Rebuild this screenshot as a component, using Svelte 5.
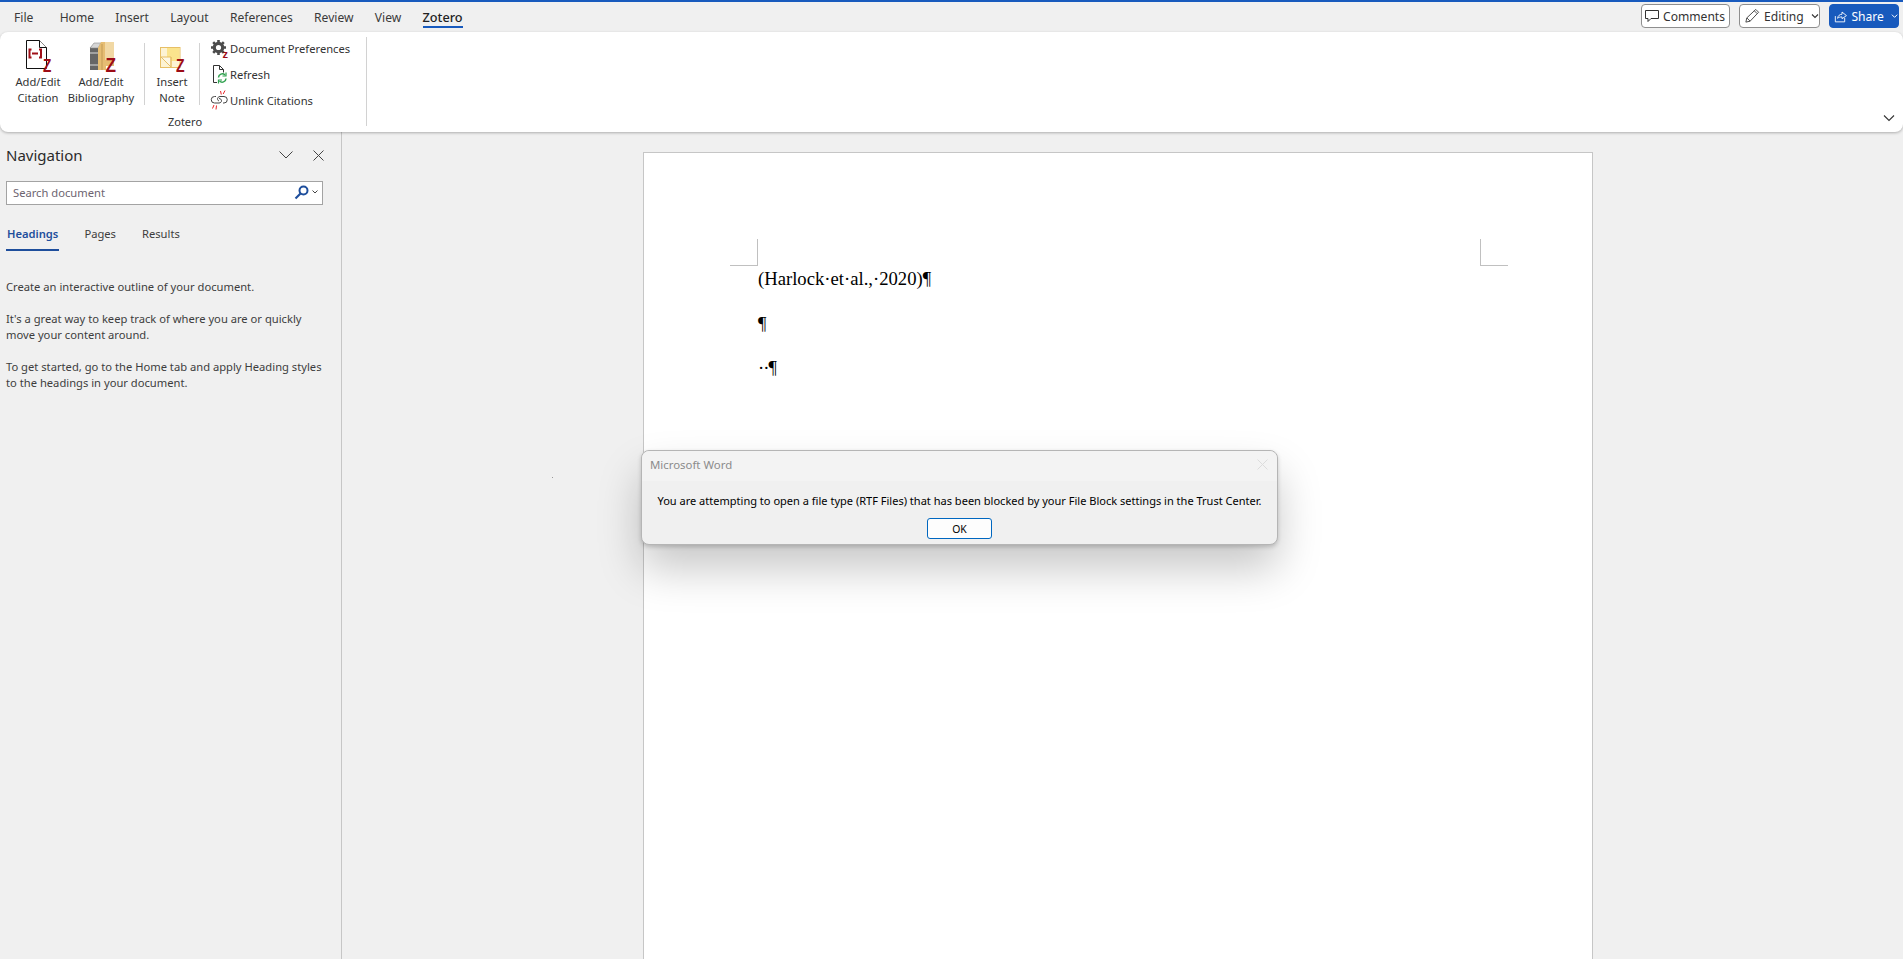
<script>
  const tabs = ['Home', 'Insert', 'Layout', 'References', 'Review', 'View'];
</script>

<div class="app">
  <header class="topbar">
    <nav class="tabs">
      <span class="tab file">File</span>
      {#each tabs as t}
        <span class="tab">{t}</span>
      {/each}
      <span class="tab active">Zotero</span>
    </nav>
    <div class="actions">
      <button class="outline comments">
        <svg width="14" height="14" viewBox="0 0 14 14" fill="none" stroke="#333" stroke-width="1"><path d="M.500 1.500h13v8H6l-3 3v-3H.500z" /></svg>
        Comments
      </button>
      <button class="outline editing">
        <svg width="16" height="16" viewBox="0 0 17 17" fill="none" stroke="#444" stroke-width="1"><path d="M2 15l1-4.500L12.500 1.500 15.500 4.500 6.500 14zM3 10.500l3.500 3.500M11 3l3 3" /></svg>
        Editing
        <svg class="car" width="8" height="6" viewBox="0 0 8 6" fill="none" stroke="#333" stroke-width="1.100"><path d="M1 1.500l3 3 3-3" /></svg>
      </button>
      <button class="share">
        <svg width="15" height="15" viewBox="0 0 15 15" fill="none" stroke="#fff" stroke-width="1"><path d="M1.500 7v6.500h10.500V9M4 9.500C4.500 6.500 6.500 5 9 5V2.500L14 6.500 9 10V8C7 8 5.500 8.200 4 9.500z" /></svg>
        Share
        <svg class="car" width="8" height="6" viewBox="0 0 8 6" fill="none" stroke="#fff" stroke-width="1.100"><path d="M1 1.500l3 3 3-3" /></svg>
      </button>
    </div>
  </header>

  <section class="ribbon">
    <div class="group">
      <div class="group-items">
        <div class="big cite">
          <svg width="32" height="36" viewBox="0 0 32 36" class="ico">
            <path d="M4.500 2.500h13l7 7v21h-20z" fill="#fff" stroke="#111" stroke-width="1" />
            <path d="M17.500 2.500v7h7" fill="#fff" stroke="#111" stroke-width="1" />
            <path d="M9.500 11.500H7.500v8h2M17 11.500h2v8h-2M10 15.500h6" fill="none" stroke="#a01018" stroke-width="2" />
            <text class="z" transform="translate(21 34) scale(.72 1)" font-size="19">Z</text>
          </svg>
          <span>Add/Edit<br />Citation</span>
        </div>
        <div class="big bib">
          <svg width="32" height="36" viewBox="0 0 32 36" class="ico">
            <path d="M5 10l4-4h4v26H5z" fill="#666" />
            <path d="M5 10l4-5h7l-3 5z" fill="#d6d6d6" stroke="#8a8a8a" stroke-width=".6" />
            <path d="M5 15h8M5 27h8" stroke="#dcdcdc" stroke-width="1" />
            <path d="M13 10l3-6h13v24H21v4h-8z" fill="#e6bd72" />
            <path d="M20 4h9v18h-9z" fill="#f1d8a4" />
            <path d="M17 6v26" stroke="#c19a55" stroke-width="1" />
            <text class="z" transform="translate(20.500 34) scale(.82 1)" font-size="21">Z</text>
          </svg>
          <span>Add/Edit<br />Bibliography</span>
        </div>
        <i class="sep"></i>
        <div class="big note">
          <svg width="32" height="36" viewBox="0 0 32 36" class="ico">
            <rect x="4.500" y="9.500" width="19.500" height="20" fill="#fdf3d4" stroke="#e7bf66" stroke-width="1" />
            <rect x="11" y="10" width="12.500" height="13" fill="#fbe48d" />
            <path d="M5 19h10v10zM15 19v10" fill="#fdf7e4" stroke="#e7bf66" stroke-width="1" />
            <text class="z" transform="translate(20 34) scale(.78 1)" font-size="18">Z</text>
          </svg>
          <span>Insert<br />Note</span>
        </div>
        <i class="sep"></i>
        <div class="smalls">
          <div class="small">
            <svg width="18" height="20" viewBox="0 0 18 20" class="ico-s">
              <circle cx="7.500" cy="9.500" r="4.200" fill="none" stroke="#4c4c4c" stroke-width="3.200" />
              <path d="M7.500 2v3M7.500 14v3M0 9.500h3M12 9.500h3M2.200 4.200l2.100 2.100M10.700 12.700l2.100 2.100M12.800 4.200l-2.100 2.100M4.300 12.700l-2.100 2.100" stroke="#4c4c4c" stroke-width="2.600" />
              <text transform="translate(11.500 19.500)" font-size="11" class="z">z</text>
            </svg>
            <span>Document Preferences</span>
          </div>
          <div class="small">
            <svg width="18" height="20" viewBox="0 0 18 20" class="ico-s">
              <path d="M6 18.500H2.500v-17h6l4 4v3" fill="none" stroke="#333" stroke-width="1" />
              <path d="M8.500 1.500v4h4" fill="none" stroke="#333" stroke-width="1" />
              <path d="M7.500 13.500a3.800 3.800 0 0 1 6.500-2.500M15 14.500a3.800 3.800 0 0 1-6.500 2.500" fill="none" stroke="#2fa14f" stroke-width="1.500" />
              <path d="M15 8.500v3.500h-3.500M7.500 19.500V16h3.500" fill="none" stroke="#2fa14f" stroke-width="1.200" />
            </svg>
            <span>Refresh</span>
          </div>
          <div class="small">
            <svg width="18" height="20" viewBox="0 0 18 20" class="ico-s">
              <path d="M5 6.500H3.500a3.200 3.200 0 0 0 0 6.500H8c1.500 0 2.500-1 2.500-2.200S9.500 8.500 8 8.500" fill="none" stroke="#444" stroke-width="1" />
              <path d="M8 11c-1.200-.5-1.500-1.500-1.500-2.300S7.500 6.500 9 6.500h4a3.200 3.200 0 0 1 0 6.500h-1" fill="none" stroke="#444" stroke-width="1" />
              <path d="M9.500 1l.8 3.500M14 .5l-1.800 3.500M3 15l-1.500 3.500M5.500 15.500l-.5 4" stroke="#e8262a" stroke-width="1" fill="none" />
            </svg>
            <span>Unlink Citations</span>
          </div>
        </div>
      </div>
      <div class="group-label">Zotero</div>
    </div>
    <i class="group-sep"></i>
    <svg class="collapse" width="12" height="8" viewBox="0 0 12 8" fill="none" stroke="#333" stroke-width="1.100"><path d="M1 1.500l5 5 5-5" /></svg>
  </section>

  <main class="main">
    <aside class="pane">
      <div class="pane-head">
        <h2>Navigation</h2>
        <svg width="14" height="8" viewBox="0 0 14 8" fill="none" stroke="#444" stroke-width="1"><path d="M.500.500l6.500 6.500 6.500-6.500" /></svg>
        <svg class="close" width="11" height="11" viewBox="0 0 11 11" fill="none" stroke="#444" stroke-width="1"><path d="M.500.500l10 10M10.500.500l-10 10" /></svg>
      </div>
      <div class="search">
        <span class="ph">Search document</span>
        <svg width="15" height="15" viewBox="0 0 15 15" fill="none" stroke="#1e4e9c"><circle cx="9.500" cy="5.500" r="4" stroke-width="2" /><path d="M6.500 8.500l-5 5" stroke-width="2.200" /></svg>
        <svg class="sc" width="6" height="4" viewBox="0 0 6 4" fill="none" stroke="#444" stroke-width="1"><path d="M.500.500L3 3 5.500.500" /></svg>
      </div>
      <div class="pane-tabs">
        <span class="ptab on">Headings</span>
        <span class="ptab">Pages</span>
        <span class="ptab">Results</span>
      </div>
      <div class="help">
        <p>Create an interactive outline of your document.</p>
        <p>It's a great way to keep track of where you are or quickly move your content around.</p>
        <p>To get started, go to the Home tab and apply Heading styles to the headings in your document.</p>
      </div>
    </aside>

    <div class="docarea">
      <i class="speck"></i>
      <div class="page">
        <div class="marks">
          <i class="mark left"></i>
          <i class="mark right"></i>
        </div>
        <div class="body-text">
          <p>(Harlock·et·al.,·2020)¶</p>
          <p>¶</p>
          <p class="tight">··¶</p>
        </div>
      </div>
    </div>
  </main>

  <div class="dialog">
    <div class="dlg-title">
      <span>Microsoft Word</span>
      <svg width="11" height="11" viewBox="0 0 11 11" fill="none" stroke="#dcdcdc" stroke-width="1"><path d="M.500.500l10 10M10.500.500l-10 10" /></svg>
    </div>
    <div class="dlg-body">
      <p>You are attempting to open a file type (RTF Files) that has been blocked by your File Block settings in the Trust Center.</p>
      <button class="ok">OK</button>
    </div>
  </div>
</div>

<style>
  :global(body) {
    margin: 0;
    overflow: hidden;
    background: #f0f0f0;
  }
  .app {
    position: relative;
    width: 1903px;
    height: 959px;
    display: flex;
    flex-direction: column;
    overflow: hidden;
    font-family: "Noto Sans", "Open Sans", sans-serif;
    color: #333;
    background: #f0f0f0;
  }
  .topbar {
    height: 30px;
    border-top: 2px solid #185abd;
    display: flex;
    justify-content: space-between;
    align-items: center;
    box-sizing: content-box;
    flex: none;
  }
  .tabs {
    display: flex;
    align-items: stretch;
    height: 30px;
    padding-left: 14px;
    gap: 21.300px;
    font-size: 12.100px;
  }
  .tab {
    display: flex;
    align-items: center;
    color: #3a3a3a;
    position: relative;
    box-sizing: border-box;
  }
  .file { margin-right: 5px; }
  .tab.active {
    color: #222;
    font-size: 12.700px;
    font-weight: 500;
  }
  .tab.active::after {
    content: "";
    position: absolute;
    left: 0;
    right: 0;
    bottom: 4px;
    height: 2px;
    background: #185abd;
  }
  .actions {
    display: flex;
    gap: 9px;
    padding-right: 4px;
    align-items: center;
    margin-top: -2px;
  }
  button {
    font-family: inherit;
    margin: 0;
    box-sizing: border-box;
  }
  .outline, .share {
    height: 24px;
    border-radius: 4px;
    font-size: 12.100px;
    display: flex;
    align-items: center;
    padding: 0;
    gap: 4px;
    color: #333;
  }
  .outline {
    background: #fff;
    border: 1px solid #8e8e8e;
  }
  .comments { width: 89px; padding-left: 3px; }
  .editing { width: 81px; padding-left: 4px; }
  .share {
    width: 70px;
    background: #185abd;
    border: 1px solid #185abd;
    color: #fff;
    padding-left: 4px;
  }
  .car { margin-left: 3px; }

  .ribbon {
    height: 100px;
    background: #fff;
    border-radius: 8px;
    box-shadow: 0 1px 3px rgba(0, 0, 0, .28);
    display: flex;
    position: relative;
    flex: none;
    z-index: 2;
    padding-left: 8px;
    font-size: 11.200px;
    color: #333;
  }
  .group {
    width: 358px;
    display: flex;
    flex-direction: column;
  }
  .group-items {
    display: flex;
    height: 82px;
    box-sizing: border-box;
    padding-top: 6px;
  }
  .big {
    display: flex;
    flex-direction: column;
    align-items: center;
    text-align: center;
    line-height: 16px;
    flex: none;
  }
  .cite { width: 60px; }
  .bib { width: 66px; margin-right: 10px; }
  .note { width: 54px; }
  .sep {
    width: 1px;
    background: #d2d2d2;
    height: 62px;
    margin-top: 5px;
    flex: none;
  }
  .ico { display: block; flex: none; overflow: visible; }
  .z {
    font-family: "Liberation Sans", sans-serif;
    font-weight: 700;
    fill: #9c0c16;
  }
  .smalls {
    display: flex;
    flex-direction: column;
    margin-top: -3px;
    margin-left: 11px;
  }
  .small {
    height: 26px;
    display: flex;
    align-items: center;
    gap: 1px;
    white-space: nowrap;
  }
  .ico-s { flex: none; overflow: visible; }
  .group-label {
    text-align: center;
    padding-right: 4px;
    font-size: 11px;
    line-height: 16px;
  }
  .group-sep {
    width: 1px;
    height: 89px;
    margin-top: 5px;
    background: #d2d2d2;
  }
  .collapse {
    position: absolute;
    right: 8px;
    bottom: 10px;
  }

  .main {
    flex: 1;
    display: flex;
    min-height: 0;
  }
  .pane {
    flex: none;
    border-right: 1px solid #c6c6c6;
    box-sizing: content-box;
    padding: 0 0 0 6px;
    width: 335px;
    display: flex;
    flex-direction: column;
    font-size: 11.200px;
    color: #3d3d3d;
  }
  .pane-head {
    display: flex;
    align-items: center;
    height: 49px;
    padding-right: 17px;
    padding-bottom: 3px;
    box-sizing: border-box;
  }
  .pane-head h2 {
    margin: 0;
    flex: 1;
    font-size: 15px;
    font-weight: 400;
    color: #2b2b2b;
  }
  .close { margin-left: 20px; }
  .search {
    height: 24px;
    width: 317px;
    box-sizing: border-box;
    background: #fff;
    border: 1px solid #a3a3a3;
    display: flex;
    align-items: center;
    padding: 0 4px 2px 6px;
    gap: 3px;
    flex: none;
  }
  .ph { flex: 1; color: #6d6470; }
  .pane-tabs {
    display: flex;
    gap: 26px;
    height: 30px;
    margin-top: 17px;
    padding-left: 1px;
    flex: none;
  }
  .ptab {
    line-height: 24px;
    position: relative;
    height: 30px;
  }
  .ptab.on {
    color: #1e4e9c;
    font-weight: 600;
  }
  .ptab.on::after {
    content: "";
    position: absolute;
    left: -1px;
    right: -1px;
    top: 27px;
    height: 2px;
    background: #1e4e9c;
  }
  .help {
    margin-top: 27px;
    width: 324px;
    line-height: 16px;
    color: #3d3d3d;
  }
  .help p { margin: 0 0 16px; }

  .docarea {
    flex: 1;
    position: relative;
    display: flex;
    padding-left: 301px;
    padding-top: 20px;
    min-width: 0;
  }
  .speck {
    position: absolute;
    left: 210px;
    top: 345px;
    width: 1px;
    height: 1px;
    background: #999;
  }
  .page {
    width: 948px;
    background: #fff;
    border: 1px solid #c6c6c6;
    border-bottom: 0;
    box-sizing: content-box;
    height: 900px;
  }
  .marks {
    display: flex;
    justify-content: space-between;
    padding: 86px 84px 0 86px;
    height: 27px;
  }
  .mark {
    width: 28px;
    height: 27px;
    border-bottom: 1px solid #c0c0c0;
    box-sizing: border-box;
  }
  .mark.left { border-right: 1px solid #c0c0c0; }
  .mark.right { border-left: 1px solid #c0c0c0; }
  .body-text {
    padding-left: 114px;
    margin-top: 1px;
    font-family: "Liberation Serif", "Times New Roman", serif;
    font-size: 18.670px;
    color: #000;
  }
  .body-text p {
    margin: 0;
    height: 44.500px;
    line-height: 24px;
  }
  .body-text .tight { letter-spacing: -1px; }

  .dialog {
    position: absolute;
    left: 641px;
    top: 450px;
    width: 637px;
    height: 95px;
    box-sizing: border-box;
    background: #f0f0f0;
    border: 1px solid #b5b5b5;
    border-radius: 8px;
    box-shadow: 0 24px 44px rgba(0, 0, 0, .22), 0 2px 4px rgba(0, 0, 0, .18);
    z-index: 5;
  }
  .dlg-title {
    height: 30px;
    display: flex;
    align-items: center;
    justify-content: space-between;
    padding: 0 9px 3px 8px;
    box-sizing: border-box;
    background: #f3f3f3;
    border-radius: 8px 8px 0 0;
    font-size: 11.400px;
    color: #8b8b8b;
  }
  .dlg-body {
    display: flex;
    flex-direction: column;
    align-items: center;
  }
  .dlg-body p {
    margin: 12px 0 0;
    font-size: 11.040px;
    line-height: 16px;
    color: #000;
    white-space: nowrap;
  }
  .ok {
    width: 65px;
    height: 21px;
    margin-top: 9px;
    background: #fdfdfd;
    border: 1px solid #0067c0;
    border-radius: 3px;
    font-size: 10.400px;
    padding: 0;
    color: #000;
  }
</style>
